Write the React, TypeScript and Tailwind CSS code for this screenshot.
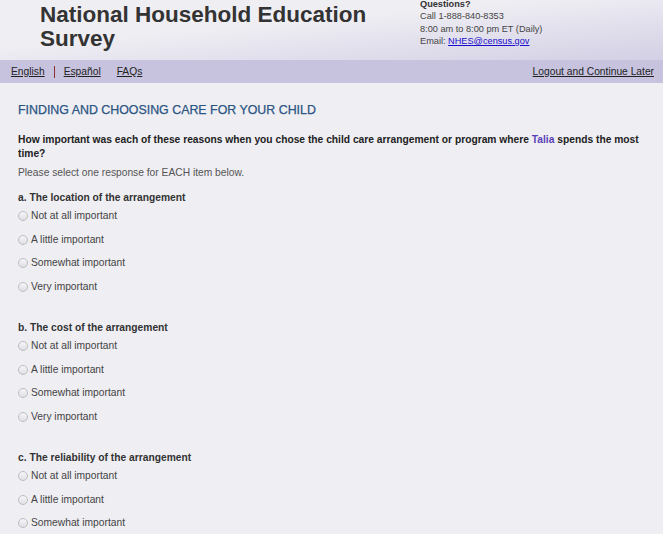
const options = ["Not at all important", "A little important", "Somewhat important", "Very important"];

const items = [
  { label: "a. The location of the arrangement", opts: options },
  { label: "b. The cost of the arrangement", opts: options },
  { label: "c. The reliability of the arrangement", opts: options },
];

function Radio() {
  return (
    <span className="inline-block w-[10px] h-[10px] rounded-full border border-[#bdbdc2] bg-gradient-to-b from-[#f6f6f8] to-[#e0e0e4] shrink-0" />
  );
}

export default function App() {
  return (
    <div className="w-[663px] h-[534px] overflow-hidden bg-[#efeef3] text-[#333] font-['Liberation_Sans',Arial,sans-serif]">
      <header className="h-[60px] bg-gradient-to-br from-[#efeef3] from-40% to-[#d3cfe5] flex">
        <h1 className="pl-[40px] pt-[3px] w-[420px] text-[22.5px] leading-[24px] font-bold text-[#333]">
          National Household Education Survey
        </h1>
        <div className="text-[9.2px] leading-[12.3px] text-[#444] -mt-[2px]">
          <p className="font-bold text-[#333]">Questions?</p>
          <p>Call 1-888-840-8353</p>
          <p>8:00 am to 8:00 pm ET (Daily)</p>
          <p>
            Email: <a className="text-[#1a0dcc] underline">NHES@census.gov</a>
          </p>
        </div>
      </header>
      <nav className="h-[23px] bg-[#c7c3df] flex items-center justify-between pl-[11px] pr-[9px] text-[10.25px] text-[#222]">
        <div className="flex items-center">
          <a className="underline">English</a>
          <span className="mx-[9px] w-px h-[12px] bg-[#8b2f2f]" />
          <a className="underline">Español</a>
          <a className="underline ml-[16px]">FAQs</a>
        </div>
        <a className="underline">Logout and Continue Later</a>
      </nav>
      <main className="px-[18px] pt-[20px]">
        <h2 className="text-[12.4px] leading-[15px] text-[#2a5482] uppercase [-webkit-text-stroke:0.25px_#2a5482]">
          Finding and Choosing Care for Your Child
        </h2>
        <p className="mt-[15px] text-[10.25px] leading-[14px] font-bold text-[#222]">
          How important was each of these reasons when you chose the child care arrangement or program where{" "}
          <span className="text-[#5a3fb8]">Talia</span> spends the most time?
        </p>
        <p className="mt-[5px] text-[10.25px] leading-[13px] text-[#555]">Please select one response for EACH item below.</p>
        <div className="mt-[12px] flex flex-col gap-[28px]">
          {items.map((item) => (
            <section key={item.label}>
              <h3 className="text-[10.25px] leading-[13px] font-bold text-[#333]">{item.label}</h3>
              <div className="mt-[6px] flex flex-col gap-[11px]">
                {item.opts.map((o) => (
                  <label key={o} className="flex items-center gap-[3px] text-[10.25px] leading-[12.5px] text-[#444]">
                    <Radio />
                    {o}
                  </label>
                ))}
              </div>
            </section>
          ))}
        </div>
      </main>
    </div>
  );
}
